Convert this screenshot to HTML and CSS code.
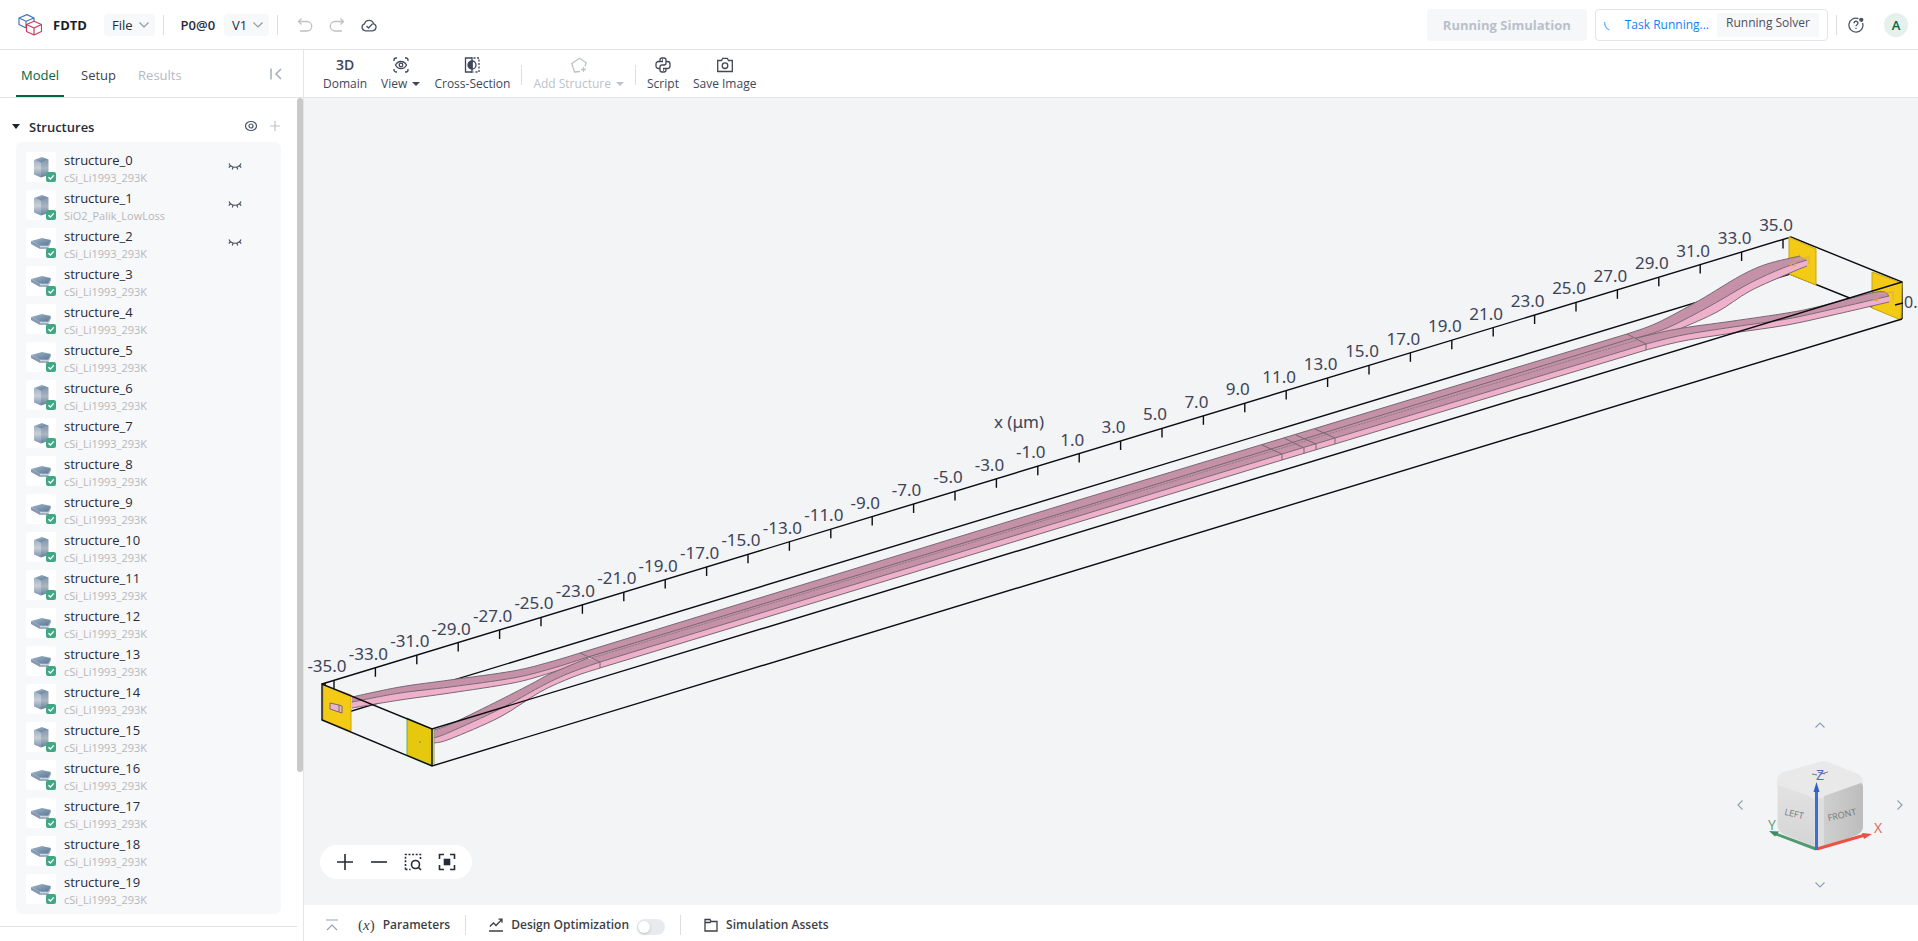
FILE: index.html
```html
<!DOCTYPE html>
<html lang="en">
<head>
<meta charset="utf-8">
<title>FDTD</title>
<link rel="stylesheet" href="styles.css">
</head>
<body>
<svg class="defs" aria-hidden="true">
  <defs>
    <linearGradient id="side" x1="0" y1="0" x2="0" y2="1"><stop offset="0" stop-color="#9fb0c3"/><stop offset=".45" stop-color="#c9d0d7"/><stop offset="1" stop-color="#7890ab"/></linearGradient>
    <linearGradient id="sideDark" x1="0" y1="0" x2="0" y2="1"><stop offset="0" stop-color="#8496ad"/><stop offset=".5" stop-color="#aab6c2"/><stop offset="1" stop-color="#627d9c"/></linearGradient>
    <linearGradient id="lid" x1="0" y1="0" x2="1" y2="1"><stop offset="0" stop-color="#a3b7c9"/><stop offset="1" stop-color="#5a7897"/></linearGradient>
    <symbol id="box" viewBox="0 0 30 30">
      <path d="M8 8v14.500l7 3V10z" fill="url(#side)"/><path d="M22.500 7.500v15.500l-7.500 2.500V10z" fill="url(#sideDark)"/><path d="M8 8l8-3 6.500 2.500-7.500 3z" fill="url(#lid)"/>
    </symbol>
    <symbol id="slab" viewBox="0 0 30 30">
      <path d="M5 13v3l9 5V17.500z" fill="#8699ae"/><path d="M14 17.500v3.500h8l3-7v-1z" fill="#9fb0c3"/><path d="M14 18.300h9" stroke="#d6dee6"/><path d="M5 13l11-3 9 2-3 5.500h-8z" fill="url(#lid)"/>
    </symbol>
    <symbol id="check" viewBox="0 0 10 10"><rect width="10" height="10" rx="2" fill="#42a884"/><path d="M2.500 5.200l1.900 1.900 3.300-3.700" fill="none" stroke="#fff" stroke-width="1.400"/></symbol>
    <symbol id="hidden" viewBox="0 0 14 10"><path d="M1 1.500C3 6.500 11 6.500 13 1.500M2.200 4L.8 5.600M5 5.200l-.7 2.300M9 5.200l.7 2.300M11.800 4l1.400 1.600" fill="none" stroke="#4b5568" stroke-width="1.200"/></symbol>
    <symbol id="chev" viewBox="0 0 12 12"><path d="M1.500 3.500L6 8l4.500-4.500" fill="none" stroke="currentColor" stroke-width="1.200"/></symbol>
  </defs>
</svg>

<div class="app">
  <header class="topbar">
    <svg class="logo" viewBox="0 0 24 22" fill="none" stroke-width="1.200" stroke-linejoin="round">
      <g stroke="#4377bd"><path d="M8 14L1 10.500V4l8-3.400L16 4v3M1 4l7 3.200L16 4M8 7.200V14"/></g>
      <g stroke="#cf3a5c"><path d="M8.500 10.500L16 7.300l7.500 3.200v7L16 21l-7.500-3.500zM8.500 10.500L16 14l7.500-3.500M16 14v7"/></g>
    </svg>
    <strong class="brand">FDTD</strong>
    <button class="pill">File <svg><use href="#chev"/></svg></button>
    <span class="rule"></span>
    <span class="project">P0@0</span>
    <button class="pill">V1 <svg><use href="#chev"/></svg></button>
    <span class="rule"></span>
    <div class="history">
      <button class="bare faded" aria-label="Undo"><svg class="i16" viewBox="0 0 16 16"><path d="M4.500 1.500l-3 3 3 3M1.500 4.500h8.500a4.500 4.500 0 0 1 0 9.500H3"/></svg></button>
      <button class="bare faded" aria-label="Redo"><svg class="i16" viewBox="0 0 16 16"><path d="M11.500 1.500l3 3-3 3M14.500 4.500H6a4.500 4.500 0 0 0 0 9.500h7"/></svg></button>
      <button class="bare" aria-label="Saved"><svg class="i16" viewBox="0 0 16 16"><path d="M4.500 13.800a3.600 3.600 0 0 1-1-7 4.700 4.700 0 0 1 9.100 0 3.600 3.600 0 0 1-1 7zM5.500 9l2 2 4-4.300"/></svg></button>
    </div>
    <div class="status">
      <button class="run" disabled>Running Simulation</button>
      <div class="task">
        <svg class="i16" viewBox="0 0 16 16"><path d="M2.500 5c0 4 1.500 6.500 5 8" stroke="#6fb4fb"/></svg>
        <a href="#task">Task Running...</a>
        <span>Running Solver</span>
      </div>
      <span class="rule"></span>
      <button class="bare" aria-label="Help"><svg class="i16" viewBox="0 0 16 16"><path d="M10.500 1.600A7 7 0 1 0 14.600 6M6 6.300c0-2.700 4-2.700 4-.2 0 1.600-2 1.600-2 3.200M8 10.700v1.400"/><circle cx="13.300" cy="2.800" r="1.500" fill="currentColor"/></svg></button>
      <button class="avatar">A</button>
    </div>
  </header>

  <aside class="sidebar">
    <nav class="tabs">
      <button class="tab on">Model</button>
      <button class="tab">Setup</button>
      <button class="tab off">Results</button>
      <button class="bare fold" aria-label="Collapse panel"><svg viewBox="0 0 12 12"><path d="M1 .5v11M11 1L6 6l5 5"/></svg></button>
    </nav>
    <div class="panel">
      <div class="content">
        <div class="section">
          <span class="caret"></span>
          <h2>Structures</h2>
          <button class="bare" aria-label="Toggle visibility"><svg class="i12" viewBox="0 0 12 12"><ellipse cx="6" cy="6" rx="5.500" ry="4.500"/><circle cx="6" cy="6" r="2"/></svg></button>
          <button class="bare faded" aria-label="Add structure"><svg class="i12" viewBox="0 0 12 12"><path d="M6 1v10M1 6h10"/></svg></button>
        </div>
        <ul class="list" id="list"></ul>
        <div class="end"></div>
      </div>
      <div class="rail"><div class="thumb"></div></div>
    </div>
  </aside>

  <main class="work">
    <div class="tools">
      <button class="tool"><b>3D</b><span>Domain</span></button>
      <button class="tool"><svg class="i16" viewBox="0 0 16 16"><path d="M1 4V3a2 2 0 0 1 2-2h1M12 1h1a2 2 0 0 1 2 2v1M15 12v1a2 2 0 0 1-2 2h-1M4 15H3a2 2 0 0 1-2-2v-1M2.500 8C5 3.300 11 3.300 13.500 8 11 12.700 5 12.700 2.500 8z"/><circle cx="8" cy="8" r="1.800"/></svg><span>View <i class="tri"></i></span></button>
      <button class="tool"><svg class="i16" viewBox="0 0 16 16"><path d="M8 1H1.500v14H8M8 0v16"/><path d="M8 4a4 4 0 0 0 0 8z" fill="currentColor"/><path d="M8 4a4 4 0 0 1 0 8"/><path d="M9.500 1H15v14H9.500" stroke-dasharray="2 1.500"/></svg><span>Cross-Section</span></button>
      <span class="rule"></span>
      <button class="tool dim" disabled><svg class="i16" viewBox="0 0 16 16"><path d="M9 14.500l-5.500.5L.8 6.500 8.500 1.200l6.700 4.600-1.200 3.500M12.500 10v5M10 12.500h5"/></svg><span>Add Structure <i class="tri"></i></span></button>
      <span class="rule"></span>
      <button class="tool"><svg class="i16" viewBox="0 0 16 16"><path d="M5 4.500V3a2 2 0 0 1 2-2h2a2 2 0 0 1 2 2v3a2 2 0 0 1-2 2H7a2 2 0 0 0-2 2v1.500H3.500A2.500 2.500 0 0 1 1 9V7a2.500 2.500 0 0 1 2.500-2.500H8M11 4.500h1.500A2.500 2.500 0 0 1 15 7v2a2.500 2.500 0 0 1-2.500 2.500H8M5 11.500V13a2 2 0 0 0 2 2h2a2 2 0 0 0 2-2v-1.500M7 2.800h1M8 13.200h1"/></svg><span>Script</span></button>
      <button class="tool"><svg class="i16" viewBox="0 0 16 16"><path d="M.7 3.500h3.800L5.700 1.300h4.600l1.200 2.200h3.800v11H.7z"/><circle cx="8" cy="8.700" r="2.800"/></svg><span>Save Image</span></button>
    </div>

    <div class="stage">
      <svg class="scene" id="scene" viewBox="304 98 1614 807" preserveAspectRatio="xMidYMid slice">
        <g class="frame">
          <path d="M322 720L1790 274L1902 319"/>
          <path d="M322 684L1791 237L1902 282V319"/>
        </g>
        <g class="port">
          <path d="M1789 237l27 12v36l-27-11z"/>
          <path d="M1872 272l30 11-1 37-29-12z"/>
        </g>
        <g id="guides"></g>
        <g class="port glow"><path d="M1790 265l5-3v4zM1795 260l14-3v7M1873 300l5-3v4zM1878 294l15-2v8"/></g>
        <g class="port">
          <path d="M323 685l28 10v36l-28-11z"/>
          <path class="exit" d="M407 718l25 11v36l-25-10z"/>
        </g>
        <path class="edge tip" d="M330 703l9 2v7l-9-3zM339 705l3 1v7l-3-1"/>
        <circle cx="420" cy="742" r="1" fill="#6fb52c"/>
        <g class="frame">
          <path d="M1902 319L432 766L322 720V684L432 729L1902 282"/>
          <path d="M432 729v37M322 684h4M1895 305l8-2"/>
        </g>
        <path d="M434 730v34" stroke="#8f9a3d" fill="none"/>
        <g id="axis"></g>
        <text class="num" x="1019" y="428">x (μm)</text>
        <text class="num left" x="1904" y="308">0.</text>
      </svg>

      <div class="zoom">
        <button class="bare" aria-label="Zoom in"><svg class="i18" viewBox="0 0 18 18"><path d="M9 1v16M1 9h16"/></svg></button>
        <button class="bare" aria-label="Zoom out"><svg class="i18" viewBox="0 0 18 18"><path d="M1 9h16"/></svg></button>
        <button class="bare" aria-label="Zoom to area"><svg class="i18" viewBox="0 0 18 18"><path d="M1.500 16.500v-15h15v5M1.500 16.500h5" stroke-dasharray="2 1.600"/><circle cx="11.500" cy="11.500" r="4"/><path d="M14 14l3 3"/></svg></button>
        <button class="bare" aria-label="Fit view"><svg class="i18" viewBox="0 0 18 18"><path d="M1.500 6V1.500H6M12 1.500h4.500V6M16.500 12v4.500H12M6 16.500H1.500V12"/><rect x="6.500" y="6.500" width="5" height="5" fill="currentColor"/></svg></button>
      </div>

      <div class="gizmo">
        <button class="bare up" aria-label="Rotate up"><svg><use href="#chev"/></svg></button>
        <button class="bare lf" aria-label="Rotate left"><svg><use href="#chev"/></svg></button>
        <svg class="cube" viewBox="1748 733 144 144">
          <defs>
            <linearGradient id="gl" x1="0" x2="0" y1="0" y2="1"><stop offset="0" stop-color="#e2e2e2"/><stop offset="1" stop-color="#d5d5d5"/></linearGradient>
            <linearGradient id="gf" x1="0" x2="1" y1="0" y2="0"><stop offset="0" stop-color="#cfcfcf"/><stop offset="1" stop-color="#bdbdbd"/></linearGradient>
          </defs>
          <path d="M1816 763q6-3 12-1l28 11q7 3 7 9v44q0 6-6 9l-30 11q-8 4-16 0l-28-12q-6-3-6-9v-44q0-6 6-9z" fill="#e9e9e9"/>
          <path d="M1778 785l31 11q5 2 5 6v44l-31-12q-5-3-5-8z" fill="url(#gl)"/>
          <path d="M1824 796l37-13q2 1 2 4v39q0 6-6 9l-33 12z" fill="url(#gf)"/>
          <path d="M1814 797q6 3 10 0v51q-5 1-10-1z" fill="#dedede"/>
          <path d="M1812 774l5 1M1818 772l7 2M1821 774l7-2" stroke="#777"/>
          <text class="face" x="1794" y="817" transform="rotate(13 1794 814)">LEFT</text>
          <text class="face" x="1842" y="818" transform="rotate(-13 1842 815)">FRONT</text>
          <path d="M1816 849l-40-15" stroke="#4f9a70" stroke-width="3"/><path d="M1769 831l10 .5-4 5z" fill="#3f8a60"/>
          <path d="M1817 849l48-14" stroke="#ea5246" stroke-width="3"/><path d="M1872 834l-10-1 2 6z" fill="#ea5246"/>
          <path d="M1816.500 850v-60" stroke="#3d6fd0" stroke-width="3"/><path d="M1816.500 782l3 10h-6z" fill="#3060c8"/>
          <text class="ax z" x="1820" y="780">Z</text><text class="ax y" x="1772" y="830">Y</text><text class="ax x" x="1878" y="833">X</text>
        </svg>
        <button class="bare rt" aria-label="Rotate right"><svg><use href="#chev"/></svg></button>
        <button class="bare dn" aria-label="Rotate down"><svg><use href="#chev"/></svg></button>
      </div>
    </div>

    <footer class="dock">
      <button class="bare lift" aria-label="Expand"><svg class="i12" viewBox="0 0 12 12"><path d="M0 1h12M1 11l5-5 5 5"/></svg></button>
      <button class="dockbtn"><span class="fx">(<em>x</em>)</span>Parameters</button>
      <span class="rule"></span>
      <button class="dockbtn"><svg class="i14" viewBox="0 0 14 14"><path d="M0 13h14M.8 8.500L4.500 5l2.500 2.500L12.800 1.500M9.500 1.200H13v3.500"/></svg><span id="optlabel">Design Optimization</span></button>
      <input class="switch" type="checkbox" aria-labelledby="optlabel">
      <span class="rule"></span>
      <button class="dockbtn"><svg class="i14" viewBox="0 0 14 14"><path d="M1 1.500h5l1 2h6v9.500H1zM1 4.500h5l1-1"/></svg>Simulation Assets</button>
    </footer>
  </main>
</div>
<script src="script.js"></script>
</body>
</html>
```
FILE: styles.css
```css
* { box-sizing: border-box; }
html, body { height: 100%; }
body { margin: 0; overflow: hidden; background: #fff; color: #272b3a; font-family: "Segoe UI", "Open Sans", "Noto Sans", sans-serif; font-size: 13px; line-height: 18px; }
button { font: inherit; color: inherit; border: 0; background: none; padding: 0; display: flex; align-items: center; }
svg { display: block; fill: none; stroke: none; }
.defs { position: absolute; width: 0; height: 0; }
.i12, .i14, .i16, .i18 { stroke: currentColor; stroke-width: 1.3; }
.i12 { width: 12px; height: 12px; stroke-width: 1.2; }
.i14 { width: 14px; height: 14px; }
.i16 { width: 16px; height: 16px; }
.i18 { width: 18px; height: 18px; stroke-width: 1.6; }
.bare { justify-content: center; color: #4b5568; }
.faded { color: #bfc1c5; }
.rule { width: 1px; height: 20px; background: #dcdee3; flex: none; }

.app { display: grid; grid-template: 50px 1fr / 304px 1fr; height: 100%; }

.topbar { grid-column: 1 / 3; display: flex; align-items: center; padding: 0 10px 0 18px; border-bottom: 1px solid #e4e5e8; }
.logo { width: 24px; height: 22px; margin-right: 11px; }
.brand { width: 35px; margin-right: 16px; color: #1b1e28; }
.pill { justify-content: space-between; height: 22px; padding: 0 5px 0 8px; border-radius: 4px; background: #f7f8fa; }
.pill svg { width: 12px; height: 12px; margin-left: 5px; color: #8e98a9; }
.topbar > .rule { margin: 0 8px; }
.project { margin: 0 9px; font-weight: 600; }
.history { display: flex; gap: 16px; margin-left: 11px; }
.status { display: flex; align-items: center; gap: 8px; margin-left: auto; }
.run { height: 32px; padding: 0 16px; border-radius: 4px; background: #f6f7f9; color: #b9c0cb; font-weight: 700; }
.task { display: flex; align-items: center; height: 32px; padding: 0 8px 0 6px; border: 1px solid #e4e5e8; border-radius: 4px; font-size: 12px; }
.task a { margin: 0 8px 0 7px; color: #1283f5; text-decoration: none; }
.task span { padding: 1px 9px 5px; background: #f7f8fa; color: #4b4f5c; }
.status .bare { margin: 0 12px 0 4px; }
.status .rule { margin-right: -1px; }
.avatar { justify-content: center; width: 24px; height: 24px; border-radius: 50%; background: #e6f0ec; color: #00663c; font-weight: 600; }

.sidebar { display: flex; flex-direction: column; min-height: 0; border-right: 1px solid #e4e5e8; }
.tabs { display: flex; height: 48px; padding: 0 20px 0 16px; gap: 12px; border-bottom: 1px solid #e0e2e5; flex: none; }
.tab { height: 47px; padding: 4px 5px 0; border-bottom: 2px solid transparent; color: #3c4252; }
.tab.on { color: #00663c; border-color: #00663c; }
.tab.off { color: #b4bac5; }
.fold { margin: 0 1px 0 auto; color: #a3adbb; }
.fold svg { width: 12px; height: 12px; stroke: currentColor; stroke-width: 1.5; }
.panel { display: flex; flex: 1; min-height: 0; }
.content { flex: 1; min-width: 0; overflow: hidden; }
.section { display: flex; align-items: center; height: 44px; padding: 12px 16px 0 12px; gap: 12px; }
.section h2 { margin: 2px auto 0 -3px; font-size: 13px; font-weight: 600; }
.caret { border: 4px solid transparent; border-top: 5px solid #1f2330; border-bottom: 0; }
.list { margin: 0 16px 12px; padding: 10px; border-radius: 6px; background: #f7f8fa; list-style: none; display: grid; gap: 8px; }
.item { display: flex; align-items: center; height: 30px; gap: 8px; }
.thumbnail { position: relative; width: 30px; height: 30px; background: #fff; border-radius: 2px; }
.thumbnail svg { width: 30px; height: 30px; }
.thumbnail .ok { position: absolute; right: 0; bottom: 0; width: 10px; height: 10px; }
.label { display: grid; padding-top: 4px; line-height: 17px; }
.label small { font-size: 11px; color: #b6b7b9; }
.item .bare { margin: 0 29px 0 auto; }
.item .bare svg { width: 14px; height: 10px; }
.end { border-top: 1px solid #e0e2e5; }
.rail { width: 6px; }
.thumb { height: 80%; border-radius: 3px; background: #c9c9c9; }

.work { display: flex; flex-direction: column; min-width: 0; min-height: 0; }
.tools { display: flex; align-items: center; height: 48px; padding: 2px 12px 0; border-bottom: 1px solid #e4e5e8; flex: none; }
.tool { flex-direction: column; gap: 3px; padding: 0 7px; color: #40475a; font-size: 12px; line-height: 16px; }
.tool b { font-size: 14px; font-weight: 600; line-height: 16px; }
.tool.dim { color: #bcc2cd; }
.tools .rule { margin: 0 4px; }
.tri { display: inline-block; margin: 0 0 2px 2px; border: 4px solid transparent; border-top-color: currentColor; border-bottom: 0; }

.stage { position: relative; flex: 1; min-height: 0; background: #f3f4f6; overflow: hidden; }
.scene { position: absolute; inset: 0; width: 100%; height: 100%; }
.frame { stroke: #0c0d10; stroke-width: 1.4; }
.port path { fill: #f3cb17; stroke: #c9a50f; }
.port .exit { fill: #e6c80f; stroke: #6cae55; }
.port.glow path { fill: none; stroke: #e0a84a; }
.top { fill: #c591a8; }
.wall { fill: #efb0cb; }
.edge { fill: none; stroke: #77696f; stroke-width: 1; }
.edge.dash { stroke-dasharray: 2 1; stroke: #8d7a83; }
.edge.tip { fill: #eab3c8; }
.num { font-family: "Noto Sans", "Open Sans", sans-serif; font-size: 17px; fill: #3e4356; text-anchor: middle; }
.num.left { text-anchor: start; font-size: 16px; }

.zoom { position: absolute; left: 16px; bottom: 26px; display: flex; gap: 16px; height: 34px; padding: 0 16px; border-radius: 17px; background: #fff; }
.zoom .bare { color: #272b3a; }
.gizmo { position: absolute; right: 10px; bottom: 12px; display: grid; grid-template: 16px 144px 16px / 16px 144px 16px; }
.gizmo .bare { color: #94a0b3; }
.gizmo .bare svg { width: 12px; height: 12px; }
.up { grid-area: 1 / 2; transform: rotate(180deg); }
.lf { grid-area: 2 / 1; transform: rotate(90deg); }
.cube { grid-area: 2 / 2; width: 144px; height: 144px; }
.rt { grid-area: 2 / 3; transform: rotate(-90deg); }
.dn { grid-area: 3 / 2; }
.face { font-size: 9px; fill: #77787a; text-anchor: middle; }
.ax { font-size: 14px; text-anchor: middle; }
.x { fill: #d9655c; }
.y { fill: #5b9b7d; }
.z { fill: #4a70c4; }

.dock { display: flex; align-items: center; height: 36px; padding: 4px 22px 0; flex: none; }
.dockbtn { gap: 8px; font-weight: 600; color: #3d3f47; font-size: 12px; }
.dock .rule { margin: 0 15px; }
.dock .rule + .dockbtn { margin-left: 8px; }
.lift { margin-right: 20px; color: #97a3b6; }
.fx { font-family: "Liberation Serif", serif; font-size: 15px; font-weight: 400; }
.switch { appearance: none; position: relative; width: 28px; height: 16px; margin: 3px 0 0 8px; border-radius: 8px; background: #e9eaee; }
.switch::before { content: ""; position: absolute; left: 1px; top: 2px; width: 12px; height: 12px; border-radius: 50%; background: #fff; box-shadow: 0 1px 3px #0003; }
```
FILE: script.js
```js
// Structure list
const boxes = new Set([0, 1, 6, 7, 10, 11, 14, 15]);
let rows = '';
for (let i = 0; i < 20; i++) {
  const material = i === 1 ? 'SiO2_Palik_LowLoss' : 'cSi_Li1993_293K';
  rows += `<li class="item"><span class="thumbnail"><svg><use href="#${boxes.has(i) ? 'box' : 'slab'}"/></svg><svg class="ok"><use href="#check"/></svg></span>
    <span class="label"><span>structure_${i}</span><small>${material}</small></span>
    ${i < 3 ? '<button class="bare" aria-label="Show"><svg><use href="#hidden"/></svg></button>' : ''}</li>`;
}
document.getElementById('list').innerHTML = rows;

// X axis: one tick every 2 μm
let axis = '';
for (let i = 0; i < 36; i++) {
  const x = 334 + i * 41.4;
  const y = 684 - (x - 322) * 0.3043;
  axis += `<path class="frame" d="M${x} ${y}v9"/><text class="num" x="${x - 7}" y="${y - 8}">${(2 * i - 35).toFixed(1)}</text>`;
}
document.getElementById('axis').innerHTML = axis;

// Smooth curve through points
function curve(p) {
  let d = '';
  for (let i = 0; i < p.length - 1; i++) {
    const a = p[i - 1] || p[i], b = p[i], c = p[i + 1], e = p[i + 2] || c;
    d += `C${b[0] + (c[0] - a[0]) / 6} ${b[1] + (c[1] - a[1]) / 6} ${c[0] - (e[0] - b[0]) / 6} ${c[1] - (e[1] - b[1]) / 6} ${c[0]} ${c[1]}`;
  }
  return d;
}
const line = p => `M${p[0]}` + curve(p);
const band = (a, b) => { const r = [...b].reverse(); return line(a) + `L${r[0]}` + curve(r) + 'Z'; };
function guide(top, mid, low) {
  return `<path class="top" d="${band(top, mid)}"/><path class="wall" d="${band(mid, low)}"/>` +
    [top, mid, low].map(p => `<path class="edge" d="${line(p)}"/>`).join('');
}

const leftBack = guide(
  [[352, 697], [400, 687], [450, 680], [513, 671], [550, 662], [580, 653]],
  [[352, 702], [400, 693], [450, 687], [513, 678], [550, 669], [588, 657]],
  [[352, 708], [400, 700], [450, 693], [513, 683], [550, 673], [590, 660]]);
const leftFront = guide(
  [[434, 730], [453, 723], [500, 700], [533, 683], [550, 674], [588, 658]],
  [[434, 738], [450, 732], [500, 709], [540, 687], [567, 674], [600, 662]],
  [[434, 743], [450, 739], [500, 717], [540, 692], [573, 677], [600, 668]]);
const rightBack = guide(
  [[1627, 334], [1657, 323], [1700, 300], [1740, 276], [1767, 264], [1800, 256]],
  [[1633, 339], [1667, 328], [1710, 306], [1750, 283], [1783, 268], [1807, 260]],
  [[1640, 345], [1677, 330], [1717, 312], [1750, 291], [1790, 273], [1807, 266]]);
const rightFront = guide(
  [[1633, 339], [1677, 329], [1733, 321], [1787, 313], [1817, 307], [1877, 292], [1889, 296]],
  [[1646, 344], [1683, 335], [1733, 327], [1787, 319], [1833, 309], [1889, 296]],
  [[1646, 350], [1683, 341], [1733, 333], [1787, 325], [1833, 315], [1889, 302]]);
const bundle = `
  <path class="top" d="M580 653L1082 499L1627 334L1646 344L1282 454L600 662Z"/>
  <path class="wall" d="M600 662L1282 454L1646 344V350L1282 460L600 668Z"/>
  <path class="edge" d="M580 653L1082 499L1627 334M600 662L1282 454L1646 344M600 668L1282 460L1646 350M588 657L1082 507L1633 338"/>
  <path class="edge dash" d="M592 658L1082 509L1637 340"/>
  <path class="edge" d="M580 653L600 662V668M1627 334L1646 344V350"/>
  <path class="edge" d="M1262 445L1282 454V460M1284 438L1304 448V454M1296 435L1316 444V450M1315 429L1335 438V444"/>`;
document.getElementById('guides').innerHTML = leftBack + leftFront + rightBack + rightFront + bundle;
```
